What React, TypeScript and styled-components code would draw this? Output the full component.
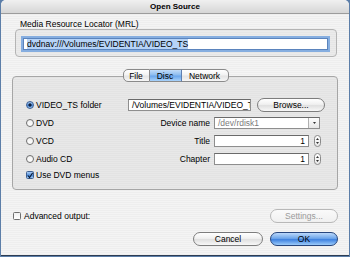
import React from 'react';
import styled, { createGlobalStyle, css } from 'styled-components';

const GlobalStyle = createGlobalStyle`
  html, body {
    margin: 0;
    padding: 0;
    background: #5c7ea8;
  }

  body {
    font-family: 'Liberation Sans', Arial, sans-serif;
    font-size: 8.5px;
    color: #000;
  }
`;

const stripes = (a: string, b: string) => css`
  background: repeating-linear-gradient(to bottom, ${a} 0 1px, ${b} 1px 2px);
`;

const Window = styled.div`
  box-sizing: border-box;
  width: 348px;
  height: 256px;
  margin: 0 1px;
  border-radius: 5px 5px 0 0;
  overflow: hidden;
  display: flex;
  flex-direction: column;
  ${stripes('#eeeeee', '#f4f4f4')}
  border-bottom: 1px solid #2c3c52;
`;

const TitleBar = styled.div`
  height: 14px;
  flex: none;
  display: flex;
  align-items: center;
  justify-content: center;
  font-weight: bold;
  font-size: 8px;
  background: linear-gradient(#f0f0f0, #d6d6d6);
  border-bottom: 1px solid #9c9c9c;
  box-sizing: border-box;
`;

const Body = styled.div`
  display: flex;
  flex-direction: column;
  padding: 0 10px 0 11px;
`;

const SectionLabel = styled.div`
  margin: 6px 0 0 8px;
  line-height: 9px;
`;

const GroupBox = styled.div`
  box-sizing: border-box;
  margin: 0 0 0 3px;
  width: 322px;
  height: 28px;
  padding: 8px 8px 0 7px;
  border: 1px solid #b4b4b4;
  border-radius: 4px;
  ${stripes('#e6e6e6', '#ebebeb')}
`;

const Field = styled.div<{ $w?: number; $focus?: boolean; $align?: string; $muted?: boolean }>`
  box-sizing: border-box;
  width: ${(p) => (p.$w ? `${p.$w}px` : '100%')};
  height: 12px;
  background: #fff;
  border: 1px solid #8e8e8e;
  border-top-color: #6a6a6a;
  padding: 0 3px;
  line-height: 10px;
  white-space: nowrap;
  overflow: hidden;
  text-align: ${(p) => p.$align || 'left'};
  color: ${(p) => (p.$muted ? '#7c7c7c' : '#000')};
  ${(p) =>
    p.$focus &&
    css`
      box-shadow: 0 0 0 2px #86aee0;
      border-color: #5b84bd;
    `}
`;

const Selected = styled.span`
  background: #b6d3f7;
`;

const TabArea = styled.div`
  margin-top: 12px;
  display: flex;
  flex-direction: column;
`;

const TabBar = styled.div`
  display: flex;
  justify-content: center;
  margin-bottom: -6px;
  position: relative;
  z-index: 1;
`;

const Tab = styled.div<{ $w: number; $active?: boolean; $pos: 'first' | 'mid' | 'last' }>`
  box-sizing: border-box;
  width: ${(p) => p.$w}px;
  height: 13px;
  display: flex;
  align-items: center;
  justify-content: center;
  border: 1px solid #8a8a8a;
  border-left-width: ${(p) => (p.$pos === 'first' ? 1 : 0)}px;
  border-radius: ${(p) => (p.$pos === 'first' ? '5px 0 0 5px' : p.$pos === 'last' ? '0 5px 5px 0' : '0')};
  background: ${(p) =>
    p.$active
      ? 'linear-gradient(#c2dcf8 0%, #8dbdf0 45%, #6aa6ec 55%, #a8d2fa 100%)'
      : 'linear-gradient(#ffffff 0%, #f2f2f2 45%, #e4e4e4 55%, #f6f6f6 100%)'};
  border-right-color: ${(p) => (p.$active ? '#5f7fb0' : '#8a8a8a')};
`;

const Panel = styled.div`
  box-sizing: border-box;
  width: 326px;
  height: 114px;
  border: 1px solid #a6a6a6;
  border-radius: 4px;
  ${stripes('#e3e3e3', '#e8e8e8')}
  padding: 19px 0 0 13px;
  display: flex;
  flex-direction: column;
`;

const Row = styled.div<{ $h?: number }>`
  display: flex;
  align-items: center;
  height: ${(p) => p.$h || 18}px;
`;

const Choice = styled.label`
  width: 102px;
  display: flex;
  align-items: center;
  gap: 2px;
  flex: none;
`;

const Radio = styled.span<{ $on?: boolean }>`
  box-sizing: border-box;
  width: 8px;
  height: 8px;
  border-radius: 50%;
  border: 1px solid ${(p) => (p.$on ? '#3d5f92' : '#6e6e6e')};
  background: ${(p) =>
    p.$on
      ? 'radial-gradient(circle, #10203c 0 1.4px, transparent 1.8px), linear-gradient(#a9cdf5, #4d8ad8 60%, #9fcaf5)'
      : 'linear-gradient(#f0f0f0, #ffffff)'};
  flex: none;
`;

const Box = styled.span<{ $on?: boolean }>`
  box-sizing: border-box;
  width: 8px;
  height: 8px;
  border-radius: 1.5px;
  border: 1px solid ${(p) => (p.$on ? '#3d5f92' : '#6e6e6e')};
  background: ${(p) => (p.$on ? 'linear-gradient(#a9cdf5, #4d8ad8 60%, #9fcaf5)' : 'linear-gradient(#f0f0f0, #ffffff)')};
  display: flex;
  align-items: center;
  justify-content: center;
  flex: none;
`;

const FieldLabel = styled.span`
  width: 86px;
  text-align: right;
  padding-right: 4px;
  box-sizing: border-box;
  flex: none;
`;

const Button = styled.div<{ $w: number; $kind?: 'default' | 'disabled' }>`
  box-sizing: border-box;
  width: ${(p) => p.$w}px;
  height: 14px;
  border-radius: 7px;
  display: flex;
  align-items: center;
  justify-content: center;
  border: 1px solid #7d7d7d;
  background: linear-gradient(#ffffff 0%, #f0f0f0 45%, #e0e0e0 55%, #f8f8f8 100%);
  ${(p) =>
    p.$kind === 'default' &&
    css`
      border-color: #27467e;
      background: linear-gradient(#bcd9fb 0%, #6da5ea 45%, #3f82e0 55%, #9ccbfa 100%);
    `}
  ${(p) =>
    p.$kind === 'disabled' &&
    css`
      border-color: #b8b8b8;
      color: #9a9a9a;
      background: linear-gradient(#fafafa, #f0f0f0);
    `}
`;

const Combo = styled.div`
  box-sizing: border-box;
  width: 106px;
  height: 12px;
  display: flex;
  background: #fff;
  border: 1px solid #8e8e8e;
  border-top-color: #6a6a6a;
`;

const ComboText = styled.div`
  flex: 1;
  padding: 0 3px;
  line-height: 10px;
  color: #7c7c7c;
`;

const ComboArrow = styled.div`
  width: 10px;
  border-left: 1px solid #b0b0b0;
  background: linear-gradient(#fdfdfd, #e6e6e6);
  display: flex;
  align-items: center;
  justify-content: center;
`;

const Stepper = styled.div`
  box-sizing: border-box;
  width: 7px;
  height: 12px;
  margin-left: 5px;
  border: 1px solid #8a8a8a;
  border-radius: 3.5px;
  background: linear-gradient(#ffffff, #e8e8e8);
  display: flex;
  flex-direction: column;
  align-items: center;
  justify-content: space-around;
  padding: 1px 0;
`;

const AdvancedRow = styled.div`
  margin-top: 19px;
  height: 14px;
  display: flex;
  align-items: center;
  justify-content: space-between;
  padding-left: 1px;
  padding-right: 1px;
`;

const Check = styled.label`
  display: flex;
  align-items: center;
  gap: 3px;
`;

const ButtonRow = styled.div`
  margin-top: 9px;
  display: flex;
  justify-content: flex-end;
  gap: 7px;
  padding-right: 1px;
`;

const Tri = ({ up }: { up?: boolean }) => (
  <svg width="3" height="2" viewBox="0 0 3 2">
    <path d={up ? 'M1.5 0 L3 2 L0 2 Z' : 'M0 0 L3 0 L1.5 2 Z'} fill="#333" />
  </svg>
);

const Tick = () => (
  <svg width="7" height="7" viewBox="0 0 7 7">
    <path d="M1 3.5 L3 5.8 L6.6 0.4" fill="none" stroke="#0b1a33" strokeWidth="1.3" />
  </svg>
);

export default function App() {
  return (
    <>
      <GlobalStyle />
      <Window>
        <TitleBar>Open Source</TitleBar>
        <Body>
          <SectionLabel>Media Resource Locator (MRL)</SectionLabel>
          <GroupBox>
            <Field $focus>
              <Selected>dvdnav:///Volumes/EVIDENTIA/VIDEO_TS</Selected>
            </Field>
          </GroupBox>

          <TabArea>
            <TabBar>
              <Tab $w={27} $pos="first">File</Tab>
              <Tab $w={32} $pos="mid" $active>Disc</Tab>
              <Tab $w={47} $pos="last">Network</Tab>
            </TabBar>
            <Panel>
              <Row>
                <Choice><Radio $on />VIDEO_TS folder</Choice>
                <Field $w={123}>/Volumes/EVIDENTIA/VIDEO_TS</Field>
                <Button $w={68} style={{ marginLeft: 6 }}>Browse...</Button>
              </Row>
              <Row>
                <Choice><Radio />DVD</Choice>
                <FieldLabel>Device name</FieldLabel>
                <Combo>
                  <ComboText>/dev/rdisk1</ComboText>
                  <ComboArrow><Tri /></ComboArrow>
                </Combo>
              </Row>
              <Row>
                <Choice><Radio />VCD</Choice>
                <FieldLabel>Title</FieldLabel>
                <Field $w={95} $align="right">1</Field>
                <Stepper><Tri up /><Tri /></Stepper>
              </Row>
              <Row>
                <Choice><Radio />Audio CD</Choice>
                <FieldLabel>Chapter</FieldLabel>
                <Field $w={95} $align="right">1</Field>
                <Stepper><Tri up /><Tri /></Stepper>
              </Row>
              <Row $h={14}>
                <Choice><Box $on><Tick /></Box>Use DVD menus</Choice>
              </Row>
            </Panel>
          </TabArea>

          <AdvancedRow>
            <Check><Box />Advanced output:</Check>
            <Button $w={68} $kind="disabled">Settings...</Button>
          </AdvancedRow>

          <ButtonRow>
            <Button $w={70}>Cancel</Button>
            <Button $w={68} $kind="default">OK</Button>
          </ButtonRow>
        </Body>
      </Window>
    </>
  );
}
